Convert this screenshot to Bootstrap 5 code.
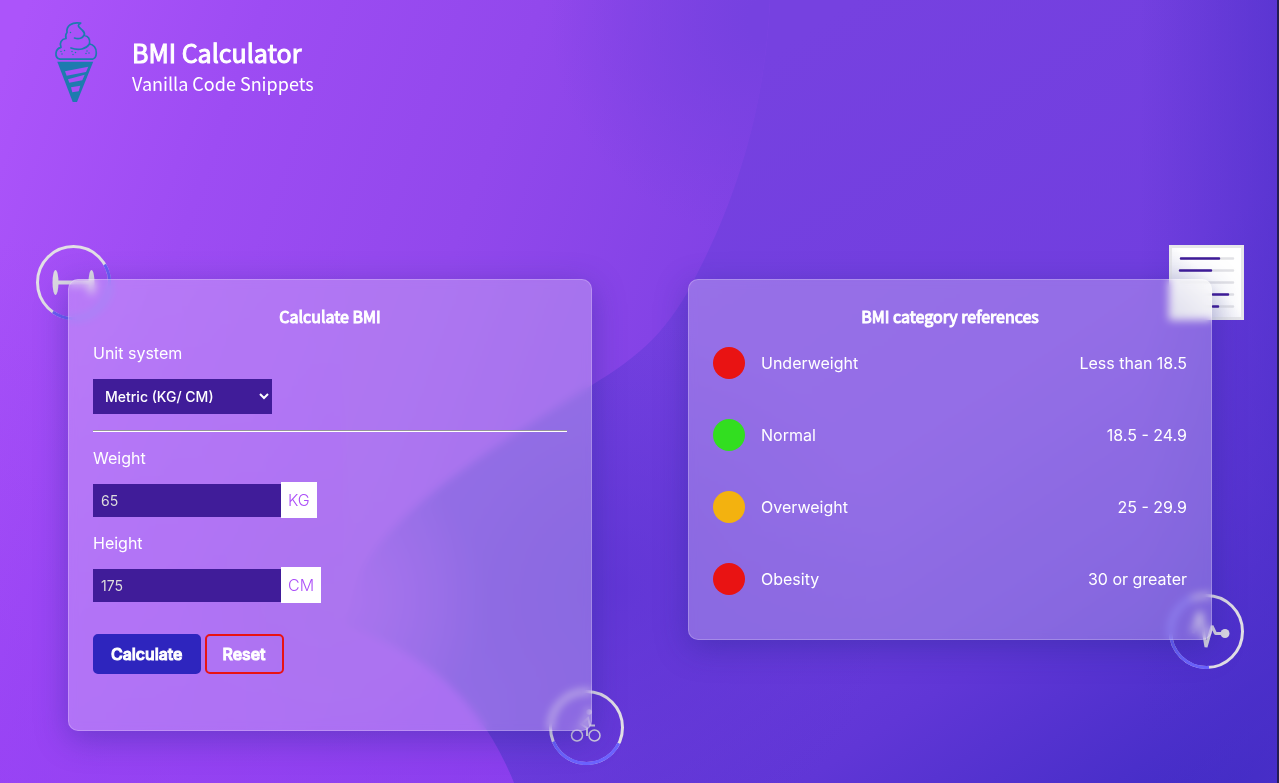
<!DOCTYPE html>
<html lang="en">
<head>
<meta charset="utf-8">
<meta name="viewport" content="width=device-width, initial-scale=1">
<title>BMI Calculator</title>
<link rel="stylesheet" href="https://cdn.jsdelivr.net/npm/bootstrap@5.3.0/dist/css/bootstrap.min.css">
<script src="https://cdn.jsdelivr.net/npm/bootstrap@5.3.0/dist/js/bootstrap.bundle.min.js" defer></script>
<style>
  :root { --field: #401c99; --heading: "Noto Sans CJK JP", "Noto Sans", sans-serif; }
  body { font-family: Inter, sans-serif; font-size: 16px; line-height: 24px; color: #fff; background: #6436d8; }
  .backdrop { position: fixed; inset: 0; width: 100%; height: 100%; z-index: -1; }
  .page { min-height: 100vh; border-right: 2px solid #241d55; padding: 20px 65px 52px 68px; }
  .brand-row { gap: 34px; margin-left: -14px; margin-bottom: 175px; }
  .brand-logo { width: 44px; height: 84px; }
  .brand-title { font: 400 25px/36px var(--heading); -webkit-text-stroke: 1px #fff; margin: 0; }
  .brand-sub { font: 400 18px/26px var(--heading); margin: 0; }
  .brand-copy { padding-top: 14px; }
  .panels { gap: 96px; }
  .panel { flex: 1 1 0; min-width: 280px; position: relative; }
  .glass {
    position: relative; padding: 24px; border: 1px solid rgba(255,255,255,.22); border-radius: 10px;
    color: #fff; background: rgba(255,255,255,.25);
    -webkit-backdrop-filter: blur(4px); backdrop-filter: blur(4px);
    box-shadow: 0 8px 32px rgba(31,38,135,.37);
  }
  .glass-form { padding-bottom: 56px; }
  .glass-list { padding-bottom: 4px; }
  .glass h2 { font: 400 16px/24px var(--heading); -webkit-text-stroke: 1px #fff; text-align: center; margin: 0 0 13px; }
  .deco { position: absolute; width: 75px; height: 75px; }
  .deco-tl { left: -32px; top: -34px; }
  .deco-tr { right: -32px; top: -34px; }
  .deco-br { right: -32px; bottom: -34px; }
  .deco-low { right: -32px; bottom: -29px; }
  .glass label { display: block; }
  .unit-pick { display: block; width: 179px; height: 35px; margin-top: 14px; padding: 8px; border: 0; border-radius: 0; background: var(--field); color: #fff; font-size: 14px; font-weight: 500; }
  .divider { margin: 16px 0 14px; border: 0; border-top: 1px solid #96939a; border-bottom: 1px solid #fff; opacity: 1; }
  .amount { margin: 12px 0 13px; }
  .amount input { width: 188px; height: 33px; padding: 0 8px; border: 0; border-radius: 0; background: var(--field); color: #ddd; font-size: 14px; }
  .amount span { height: 36px; padding: 0 7px; line-height: 37px; font-weight: 300; background: #fff; color: #ac50f8; }
  .actions { gap: 4px; margin-top: 31px; }
  .actions .btn { height: 40px; padding: 0 16px; border: 2px solid; border-radius: 5px; font-size: 16px; line-height: 36px; font-weight: 500; color: #fff; -webkit-text-stroke: 1px #fff; }
  .actions .btn-calc { background: #2e25be; border-color: #2e25be; }
  .actions .btn-clear { border-color: #e91313; }
  .ranges { margin-top: 19px; }
  .ranges th, .ranges td { padding: 0 0 40px; font-weight: 400; line-height: 32px; vertical-align: top; }
  .dot { width: 32px; height: 32px; border-radius: 50%; margin-right: 16px; }
  .dot-red { background: #e91313; }
  .dot-green { background: #32de20; }
  .dot-amber { background: #f3b20f; }
  @media (max-width: 767px) { .panels { flex-direction: column; } .panel { width: 100%; flex: none; } }
</style>
</head>
<body>
<svg class="backdrop" viewBox="0 0 1279 783" preserveAspectRatio="none" aria-hidden="true">
  <defs>
    <linearGradient id="left" gradientUnits="userSpaceOnUse" x1="0" y1="80" x2="700" y2="330">
      <stop offset="0" stop-color="#ac54fa"/><stop offset=".3" stop-color="#9d4cf3"/><stop offset=".65" stop-color="#9248ec"/><stop offset="1" stop-color="#8142e5"/>
    </linearGradient>
    <linearGradient id="right" gradientUnits="userSpaceOnUse" x1="760" y1="60" x2="1240" y2="783">
      <stop offset="0" stop-color="#7641e0"/><stop offset=".45" stop-color="#713edf"/><stop offset=".72" stop-color="#6036d6"/><stop offset="1" stop-color="#412cc5"/>
    </linearGradient>
    <linearGradient id="down" x1="0" y1="0" x2="0" y2="1">
      <stop offset=".3" stop-color="#993af8" stop-opacity="0"/><stop offset="1" stop-color="#933af6" stop-opacity=".8"/>
    </linearGradient>
    <linearGradient id="fade" x1="0" y1="0" x2="1" y2="0">
      <stop offset="0" stop-color="#4b2fc9" stop-opacity="0"/><stop offset="1" stop-color="#4b2fc9" stop-opacity=".6"/>
    </linearGradient>
    <radialGradient id="seam" gradientUnits="userSpaceOnUse" cx="770" cy="20" r="220">
      <stop offset=".1" stop-color="#7641e0"/><stop offset="1" stop-color="#7641e0" stop-opacity="0"/>
    </radialGradient>
    <radialGradient id="core" gradientUnits="userSpaceOnUse" cx="620" cy="590" r="270">
      <stop offset="0" stop-color="#5b33d2" stop-opacity=".7"/><stop offset="1" stop-color="#5932d0" stop-opacity="0"/>
    </radialGradient>
    <radialGradient id="apex" gradientUnits="userSpaceOnUse" cx="335" cy="600" r="150">
      <stop offset="0" stop-color="#9147ea"/><stop offset="1" stop-color="#9147ea" stop-opacity="0"/>
    </radialGradient>
  </defs>
  <rect width="1279" height="783" fill="url(#right)"/>
  <rect x="350" y="320" width="540" height="463" fill="url(#core)"/>
  <path d="M0 0H770C765 110 735 200 698 272C670 330 640 356 592 385C515 435 400 500 362 570Q350 600 345 625C430 655 480 700 514 783H0Z" fill="url(#left)"/>
  <path d="M0 0H770C765 110 735 200 698 272H0Z" fill="url(#seam)"/>
  <path d="M0 0H345V625C430 655 480 700 514 783H0Z" fill="url(#down)" opacity=".6"/>
  <circle cx="335" cy="600" r="150" fill="url(#apex)"/>
  <rect x="1140" width="139" height="783" fill="url(#fade)"/>
</svg>

<div class="page">
  <header class="brand-row d-flex align-items-start">
    <svg class="brand-logo" viewBox="0 0 44 84" aria-hidden="true" fill="none" stroke="#1d7baf" stroke-width="1.700" stroke-linecap="round" stroke-linejoin="round">
      <path d="M6 39.200C3 38.500 1.700 36 2 33C2.300 30 4 28 7 27.300C5 23 7.500 19 12 18.500C11.500 16 11.500 14 13 12.500C12 6 18 1.500 26.700 3.200C24 4.500 23.500 6 26 8C29 10.500 31 12 30.500 15.500C34 16 36.500 19 35.500 24C39.500 24.500 42.500 28 42.300 33C42.200 36.500 41 38.500 38.500 39.200Z"/>
      <path d="M30 15C29 18 25 19.500 20.500 18M35.500 24C32 29 25 31 17 28"/>
      <path d="M7 31.500h0M10.500 30.500h0M8 34h0M18 31.500h0M21.500 32.500h0M19 34.500h0M33 31h0M35 33h0M32 33.500h0M16.500 12.500h0" stroke-width="1.500"/>
      <path d="M3.300 41.700H39.200L23 82H18.700Z" fill="#1d7baf" stroke="none"/>
      <path d="M11 51.300L34.300 46.700L32 52L12.700 55.700ZM14 59.300L30.700 54.700L28.300 60.300L15.300 62.700ZM17 67.300L26.300 65.700L24.700 71.300L18.300 72.300Z" fill="#a650f7" stroke="none"/>
    </svg>
    <div class="brand-copy">
      <h1 class="brand-title">BMI Calculator</h1>
      <p class="brand-sub">Vanilla Code Snippets</p>
    </div>
  </header>

  <main class="panels d-flex align-items-start">
    <section class="panel">
      <svg class="deco deco-tl" viewBox="0 0 75 75" fill="none" stroke-width="3" aria-hidden="true">
        <circle cx="37.500" cy="37.500" r="36" stroke="#e2dfe5"/>
        <circle cx="37.500" cy="37.500" r="36" stroke="#6c5df5" pathLength="360" stroke-dasharray="155 205" transform="rotate(-30 37.500 37.500)"/>
        <ellipse cx="19.500" cy="37.500" rx="3" ry="12.500" fill="#dedbe2" stroke="none"/><ellipse cx="55.500" cy="37.500" rx="3" ry="12.500" fill="#dedbe2" stroke="none"/>
        <path d="M20 37.500H55" stroke="#dedbe2" stroke-width="4"/>
      </svg>
      <svg class="deco deco-br" viewBox="0 0 75 75" fill="none" stroke-width="3" aria-hidden="true">
        <circle cx="37.500" cy="37.500" r="36" stroke="#e2dfe5"/>
        <circle cx="37.500" cy="37.500" r="36" stroke="#6c63ff" pathLength="360" stroke-dasharray="131 229" transform="rotate(26 37.500 37.500)"/>
        <g stroke="#d4cedf" stroke-width="1.500">
          <circle cx="28" cy="45.500" r="5.500"/><circle cx="45.500" cy="45.500" r="5.500"/>
          <path d="M38 46V38L32 34L39 28L41 35.500H46" stroke-width="2"/><circle cx="40" cy="22" r="2" fill="#d4cedf"/>
        </g>
      </svg>
      <form class="glass glass-form">
        <h2>Calculate BMI</h2>
        <label for="system">Unit system</label>
        <select id="system" class="unit-pick"><option>Metric (KG/ CM)</option><option>Imperial (LBS/ IN)</option></select>
        <hr class="divider">
        <label for="weight">Weight</label>
        <div class="amount d-flex align-items-center"><input id="weight" type="text" inputmode="numeric" value="65"><span>KG</span></div>
        <label for="height">Height</label>
        <div class="amount d-flex align-items-center mb-0"><input id="height" type="text" inputmode="numeric" value="175"><span>CM</span></div>
        <div class="actions d-flex">
          <button type="button" class="btn btn-calc">Calculate</button>
          <button type="reset" class="btn btn-clear">Reset</button>
        </div>
      </form>
    </section>

    <section class="panel">
      <svg class="deco deco-tr" viewBox="0 0 75 75" fill="none" stroke-linecap="round" aria-hidden="true">
        <defs><linearGradient id="paper" x1="1" y1="0" x2="0" y2="1"><stop offset=".45" stop-color="#fff"/><stop offset="1" stop-color="#cfcee6"/></linearGradient></defs>
        <rect x="1.500" y="1.500" width="72" height="72" fill="url(#paper)" stroke="#e7e7ea" stroke-width="3"/>
        <path d="M12 13.500H64M12 25.500H64M12 37.500H64M12 49.500H64M12 61.500H64" stroke="#e2e2e6" stroke-width="2.500"/>
        <path d="M12 13.500H50M11 25.500H42M44 49.500H59M44 61.500H49" stroke="#401c99" stroke-width="2.500"/>
      </svg>
      <svg class="deco deco-low" viewBox="0 0 75 75" fill="none" stroke-width="3" aria-hidden="true">
        <circle cx="37.500" cy="37.500" r="36" stroke="#e2dfe5"/>
        <circle cx="37.500" cy="37.500" r="36" stroke="#6c63ff" pathLength="360" stroke-dasharray="160 200" transform="rotate(86 37.500 37.500)"/>
        <path d="M24 39L31 18L37 53L43 32L46.500 39.500H54" stroke="#dedbe2" stroke-width="3" stroke-linejoin="bevel"/>
        <circle cx="56" cy="39.500" r="4.500" fill="#dedbe2" stroke="none"/>
      </svg>
      <div class="glass glass-list">
        <h2>BMI category references</h2>
        <table class="ranges w-100">
          <tbody>
            <tr><th scope="row"><span class="d-flex"><span class="dot dot-red"></span>Underweight</span></th><td class="text-end">Less than 18.5</td></tr>
            <tr><th scope="row"><span class="d-flex"><span class="dot dot-green"></span>Normal</span></th><td class="text-end">18.5 - 24.9</td></tr>
            <tr><th scope="row"><span class="d-flex"><span class="dot dot-amber"></span>Overweight</span></th><td class="text-end">25 - 29.9</td></tr>
            <tr><th scope="row"><span class="d-flex"><span class="dot dot-red"></span>Obesity</span></th><td class="text-end">30 or greater</td></tr>
          </tbody>
        </table>
      </div>
    </section>
  </main>
</div>
</body>
</html>
